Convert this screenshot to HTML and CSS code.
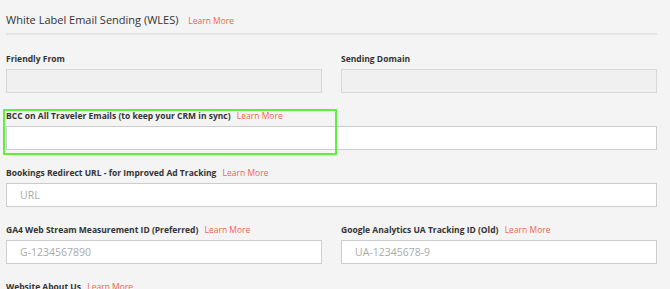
FILE: index.html
```html
<!DOCTYPE html>
<html lang="en">
<head>
    <meta charset="UTF-8">
    <meta name="viewport" content="width=device-width, initial-scale=1.0">
    <title>White Label Email Sending</title>
    <link rel="stylesheet" href="styles.css">
</head>
<body>
    <div class="section">
        <h2 class="section-title">White Label Email Sending (WLES) <a href="#" class="learn-more">Learn More</a></h2>

        <div class="row">
            <div class="field">
                <label>Friendly From</label>
                <input type="text" disabled>
            </div>
            <div class="field">
                <label>Sending Domain</label>
                <input type="text" disabled>
            </div>
        </div>

        <div class="field highlighted">
            <label>BCC on All Traveler Emails (to keep your CRM in sync) <a href="#" class="learn-more">Learn More</a></label>
            <input type="text">
            <div class="highlight-box"></div>
        </div>

        <div class="field">
            <label>Bookings Redirect URL - for Improved Ad Tracking <a href="#" class="learn-more">Learn More</a></label>
            <input type="text" placeholder="URL">
        </div>

        <div class="row">
            <div class="field">
                <label>GA4 Web Stream Measurement ID (Preferred) <a href="#" class="learn-more">Learn More</a></label>
                <input type="text" placeholder="G-1234567890">
            </div>
            <div class="field">
                <label>Google Analytics UA Tracking ID (Old) <a href="#" class="learn-more">Learn More</a></label>
                <input type="text" placeholder="UA-12345678-9">
            </div>
        </div>

        <div class="field">
            <label>Website About Us <a href="#" class="learn-more">Learn More</a></label>
            <input type="text">
        </div>
    </div>
</body>
</html>
```

FILE: styles.css
```css
body {
    font-family: "Open Sans", Arial, sans-serif;
    margin: 0;
    background-color: #f4f4f4;
    color: #333;
}
.section {
    width: 651px;
    padding: 10px 0 0 6px;
}
.section-title {
    font-size: 11px;
    font-weight: normal;
    line-height: 20px;
    margin: 0 0 16px;
    padding-bottom: 2px;
    border-bottom: 2px solid #e4e4e4;
}
.section-title .learn-more {
    margin-left: 7px;
}
.learn-more {
    color: #f2674d;
    font-size: 8.5px;
    font-weight: normal;
    text-decoration: none;
    margin-left: 4px;
}
.row {
    display: grid;
    grid-template-columns: 1fr 1fr;
    column-gap: 19px;
}
.field {
    position: relative;
    margin-bottom: 15px;
}
.field label {
    display: block;
    font-size: 8.5px;
    font-weight: bold;
    line-height: 16px;
    margin-bottom: 2px;
}
.field input {
    display: block;
    box-sizing: border-box;
    width: 100%;
    height: 24px;
    margin: 0;
    padding: 0 13px;
    border: 1px solid #ccc;
    background-color: #fff;
    font-family: "Open Sans", Arial, sans-serif;
    font-size: 10.5px;
    color: #333;
    outline: none;
}
.field input::placeholder {
    color: #aaa;
}
.field input:disabled {
    background-color: #f0f0f0;
    border-color: #d8d8d8;
}
.highlight-box {
    position: absolute;
    left: -3px;
    top: 1px;
    width: 330px;
    height: 42px;
    border: 2px solid #5cf23c;
    pointer-events: none;
}
```
